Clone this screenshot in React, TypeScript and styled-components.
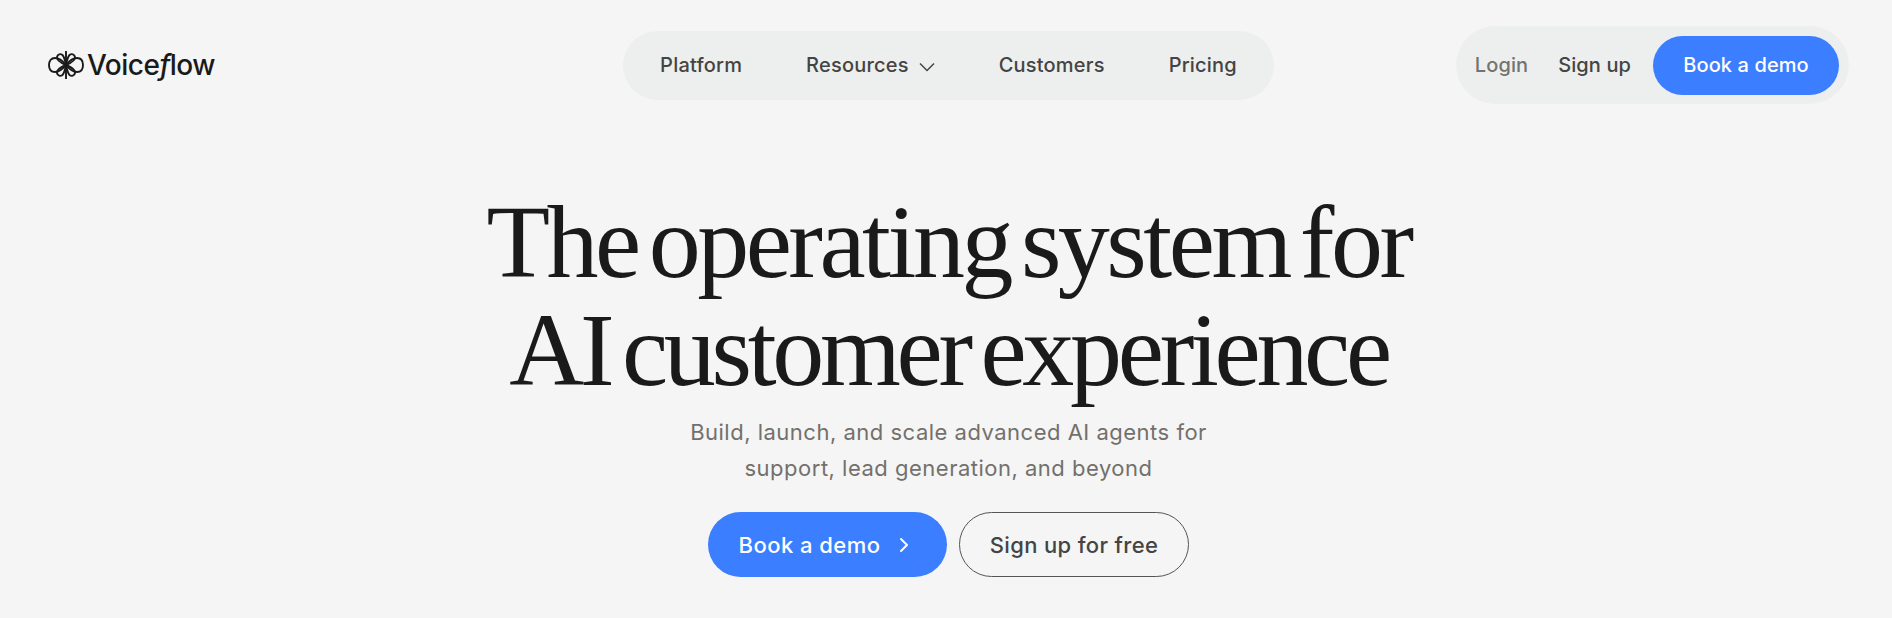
import styled, { createGlobalStyle } from "styled-components";
import { ChevronRight } from "lucide-react";

const GlobalStyle = createGlobalStyle`
  html, body {
    margin: 0;
    background: #f5f5f5;
    font-family: Inter, "Liberation Sans", sans-serif;
    overflow: hidden;
  }
`;

const navItems = ["Platform", "Resources", "Customers", "Pricing"];

const App = () => {
  return (
    <Page>
      <GlobalStyle />
      <Header>
        <Logo>
          <LogoMark viewBox="0 0 36 28" fill="none" stroke="#1a1a1a" strokeWidth="1.9">
            {/* side loops */}
            <path d="M18 14 C14 9 11 7 7 7 C3 7 1 10 1 14 C1 18 3 21 7 21 C11 21 14 19 18 14 C22 9 25 7 29 7 C33 7 35 10 35 14 C35 18 33 21 29 21 C25 21 22 19 18 14 Z" />
            {/* upper petals */}
            <path d="M18 14 C13 12 8.500 9 9 6 C9.500 3 12.500 2.500 14.500 4 C16 5.500 17 9 18 14 C19 9 20 5.500 21.500 4 C23.500 2.500 26.500 3 27 6 C27.500 9 23 12 18 14 Z" />
            {/* lower petals */}
            <path d="M18 14 C13 16 8.500 19 9 22 C9.500 25 12.500 25.500 14.500 24 C16 22.500 17 19 18 14 C19 19 20 22.500 21.500 24 C23.500 25.500 26.500 25 27 22 C27.500 19 23 16 18 14 Z" />
            <path d="M18 0 V28" />
          </LogoMark>
          <LogoText>
            Voice<LogoF>f</LogoF>low
          </LogoText>
        </Logo>
        <Nav>
          {navItems.map((item) => (
            <NavLink key={item}>
              {item}
              {item === "Resources" && (
                <NavChevron viewBox="0 0 16 10" fill="none" stroke="#444444" strokeWidth="1.5">
                  <path d="M1 1.500 L8 8.500 L15 1.500" />
                </NavChevron>
              )}
            </NavLink>
          ))}
        </Nav>
        <Actions>
          <ActionLink $muted>Login</ActionLink>
          <ActionLink>Sign up</ActionLink>
          <DemoButton>Book a demo</DemoButton>
        </Actions>
      </Header>
      <Hero>
        <Title>
          <TitleLine $tracking={-3.5} $wordGap={-11.5}>The operating system for</TitleLine>
          <TitleLine $tracking={-4.3} $wordGap={-10}>AI customer experience</TitleLine>
        </Title>
        <Subtitle>
          Build, launch, and scale advanced AI agents for
          <br />
          support, lead generation, and beyond
        </Subtitle>
        <Buttons>
          <PrimaryButton>
            Book a demo
            <ChevronRight size={24} strokeWidth={2} />
          </PrimaryButton>
          <OutlineButton>Sign up for free</OutlineButton>
        </Buttons>
      </Hero>
    </Page>
  );
};

const Page = styled.div`
  width: 1892px;
  height: 618px;
  background: #f5f5f5;
  overflow: hidden;
`;

const Header = styled.header`
  display: grid;
  grid-template-columns: 1fr auto 1fr;
  align-items: center;
  padding: 26px 43px 0 48px;
`;

const Logo = styled.div`
  display: flex;
  align-items: center;
  gap: 3px;
`;

const LogoMark = styled.svg`
  width: 36px;
  height: 28px;
`;

const LogoText = styled.span`
  font-size: 28px;
  font-weight: 500;
  letter-spacing: -0.5px;
  color: #1a1a1a;
`;

const LogoF = styled.span`
  font-style: italic;
`;

const Nav = styled.nav`
  display: flex;
  align-items: center;
  gap: 64px;
  height: 69px;
  padding: 0 37px;
  border-radius: 35px;
  background: #edefee;
`;

const NavLink = styled.a`
  display: flex;
  align-items: center;
  gap: 10px;
  font-size: 20px;
  font-weight: 500;
  letter-spacing: 0.2px;
  color: #444444;
`;

const NavChevron = styled.svg`
  width: 16px;
  height: 10px;
  margin-top: 3px;
`;

const Actions = styled.div`
  justify-self: end;
  display: flex;
  align-items: center;
  height: 78px;
  padding: 0 10px 0 19px;
  border-radius: 39px;
  background: #edefee;
`;

const ActionLink = styled.a<{ $muted?: boolean }>`
  margin-right: 30px;
  font-size: 20px;
  font-weight: 500;
  letter-spacing: 0.1px;
  color: ${(props) => (props.$muted ? "#737373" : "#444444")};
  &:nth-child(2) {
    margin-right: 22px;
  }
`;

const DemoButton = styled.button`
  width: 186px;
  height: 59px;
  border: none;
  border-radius: 30px;
  background: #3b7eff;
  color: #ffffff;
  font: 500 20px Inter, "Liberation Sans", sans-serif;
  letter-spacing: 0.1px;
`;

const Hero = styled.main`
  display: flex;
  flex-direction: column;
  align-items: center;
  margin-top: 84px;
  padding-left: 5px;
`;

const Title = styled.h1`
  margin: 0;
  font-family: "Liberation Serif", serif;
  font-size: 104px;
  font-weight: 400;
  line-height: 108px;
  text-align: center;
  color: #1a1a1a;
`;

const TitleLine = styled.span<{ $tracking: number; $wordGap: number }>`
  display: block;
  letter-spacing: ${(props) => props.$tracking}px;
  word-spacing: ${(props) => props.$wordGap}px;
`;

const Subtitle = styled.p`
  margin: 10px 0 0;
  font-size: 22px;
  line-height: 36px;
  letter-spacing: 0.5px;
  text-align: center;
  color: #73706c;
`;

const Buttons = styled.div`
  display: flex;
  gap: 12px;
  margin-top: 26px;
`;

const PrimaryButton = styled.button`
  display: flex;
  align-items: center;
  justify-content: center;
  gap: 12px;
  width: 239px;
  height: 65px;
  border: none;
  border-radius: 33px;
  background: #3b7eff;
  color: #ffffff;
  font: 500 22px Inter, "Liberation Sans", sans-serif;
  letter-spacing: 0.45px;
`;

const OutlineButton = styled.button`
  width: 230px;
  height: 65px;
  border: 1px solid #555555;
  border-radius: 33px;
  background: transparent;
  color: #444444;
  font: 500 22px Inter, "Liberation Sans", sans-serif;
  letter-spacing: 0.35px;
`;

export default App;
